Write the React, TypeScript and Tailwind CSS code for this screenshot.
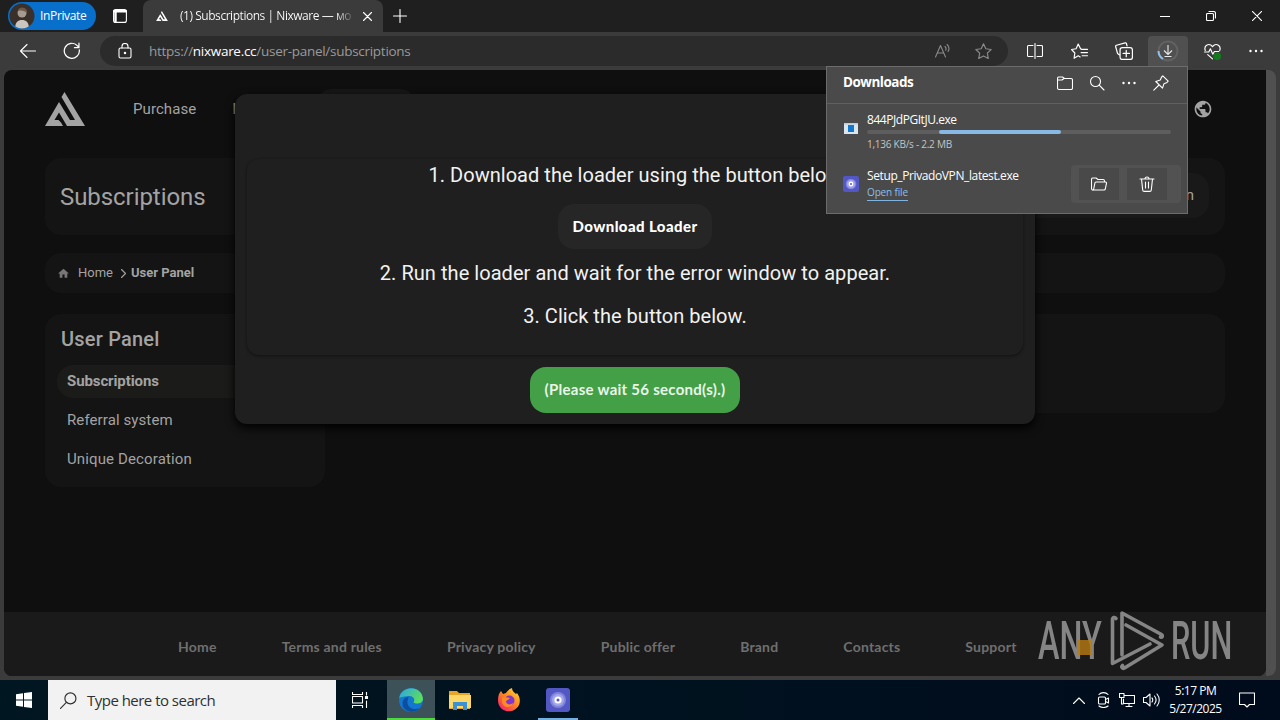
import type { ReactNode } from 'react'
import { MdHome, MdPublic } from 'react-icons/md'

type IconProps = { className?: string; children: ReactNode; box?: string }

function Icon({ className = 'size-4', children, box = '0 0 16 16' }: IconProps) {
  return (
    <svg
      viewBox={box}
      fill="none"
      stroke="currentColor"
      strokeWidth="1.1"
      strokeLinecap="round"
      strokeLinejoin="round"
      className={`shrink-0 ${className}`}
    >
      {children}
    </svg>
  )
}

function NixLogo({ className }: { className?: string }) {
  return (
    <svg viewBox="0 0 40 34" fill="currentColor" className={className}>
      <path d="M0 34 14 10 25 28H30L16.500 5 19.500 0 40 34H22L14 20.500 9.500 28H13.500L16 30.500 18 34Z" />
    </svg>
  )
}

function VpnIcon({ className }: { className?: string }) {
  return (
    <svg viewBox="0 0 24 24" className={`shrink-0 ${className}`}>
      <rect width="24" height="24" rx="3" fill="#5357c4" />
      <circle cx="12" cy="12" r="8" fill="#8085da" />
      <circle cx="12" cy="12" r="6" fill="#a3a6ee" />
      <circle cx="12" cy="12" r="3.600" fill="#fff" />
      <circle cx="12" cy="12" r="1.500" fill="#5357c4" />
    </svg>
  )
}

function Dots({ className }: { className?: string }) {
  return (
    <svg viewBox="0 0 14 4" fill="currentColor" className={`h-1 w-[14px] ${className}`}>
      <circle cx="1.500" cy="2" r="1.200" />
      <circle cx="7" cy="2" r="1.200" />
      <circle cx="12.500" cy="2" r="1.200" />
    </svg>
  )
}

function TabBar() {
  return (
    <div className="flex h-8 bg-[#1f1f1f]">
      <div className="mt-[2px] ml-2 flex h-7 w-[88px] items-center rounded-full bg-[#0870cb]">
        <svg viewBox="0 0 26 26" className="ml-px size-[26px]">
          <defs>
            <clipPath id="avatar">
              <circle cx="13" cy="13" r="12.500" />
            </clipPath>
          </defs>
          <g clipPath="url(#avatar)">
            <rect width="26" height="26" fill="#3a2f29" />
            <circle cx="13" cy="10" r="4.500" fill="#a69b90" />
            <path d="M6 26c0-7 3-9 7-9s7 2 7 9Z" fill="#c9c5c0" />
            <path d="M9 8c0-4 7-5 9 0v2c-2-2-5-3-9-2Z" fill="#6b5a4c" />
          </g>
        </svg>
        <span className="ml-[5px] text-[12px] tracking-[-0.35px] text-white">InPrivate</span>
      </div>
      <div className="ml-[17px] flex items-center">
        <Icon className="size-[14px] text-white" box="0 0 14 14">
          <rect x="0.600" y="0.600" width="12.800" height="12.800" rx="2" />
          <path d="M1 2.300h12M2.500 3v9.500" strokeWidth="2.400" />
        </Icon>
      </div>
      <div className="ml-4 flex h-8 w-60 items-center rounded-t-lg bg-[#3b3b3b] pl-[13px]">
        <NixLogo className="h-[10px] w-3 text-white" />
        <span className="ml-3 w-[176px] bg-linear-to-r from-white from-88% to-[#3b3b3b] bg-clip-text text-[12px] tracking-[-0.46px] whitespace-nowrap text-transparent">
          (1) Subscriptions | Nixware — <span className="text-[12px]">мо</span>
        </span>
        <Icon className="ml-[7px] size-[9px] text-white" box="0 0 9 9">
          <path d="m.5.5 8 8m0-8-8 8" />
        </Icon>
      </div>
      <Icon className="mt-[9px] ml-[10px] size-[14px] text-white" box="0 0 14 14">
        <path d="M7 .5v13M.5 7h13" />
      </Icon>
      <div className="mt-[11px] mr-[18px] ml-auto flex gap-9 text-white">
        <Icon className="size-[10px]" box="0 0 10 10">
          <path d="M0 5.500h10" />
        </Icon>
        <Icon className="size-[10px]" box="0 0 10 10">
          <rect x=".5" y="2.500" width="7" height="7" rx="1" />
          <path d="M3 .5h4.500a2 2 0 0 1 2 2V7" />
        </Icon>
        <Icon className="size-[10px]" box="0 0 10 10">
          <path d="m.3.300 9.400 9.400m0-9.400L.300 9.700" />
        </Icon>
      </div>
    </div>
  )
}

function Toolbar() {
  return (
    <div className="flex h-[38px] items-center bg-[#3b3b3b] text-white">
      <Icon className="ml-5 size-4">
        <path d="M15.500 8H.8M7 1.500.5 8 7 14.500" />
      </Icon>
      <Icon className="ml-[27px] size-[18px]">
        <path d="M14.500 7A6.700 6.700 0 1 1 12.800 3.300L14.200 4.700M14.200 1v4h-4" />
      </Icon>
      <div className="ml-[19px] flex h-[30px] w-[908px] items-center rounded-full bg-[#2b2b2b]">
        <Icon className="ml-[18px] h-4 w-[14px]" box="0 0 14 16">
          <rect x="1" y="5" width="12" height="10" rx="1.500" />
          <path d="M4 5V3.500a3 3 0 0 1 6 0V5" />
          <circle cx="7" cy="10" r=".7" fill="currentColor" />
        </Icon>
        <span className="ml-[17px] text-[13.5px] tracking-[-0.28px] text-[#9a9a9a]">
          https://<span className="text-white">nixware.cc</span>/user-panel/subscriptions
        </span>
        <div className="mr-4 ml-auto flex items-center gap-6 text-[#8a8a8a]">
          <Icon className="size-4">
            <path d="M.5 14 5.500 2.500l5 11.500M2.300 10h6.400M10 3.500c1.200 1.200 1.200 2.800.7 3.800M12 1.500c2.200 2 2.300 5 1 7" />
          </Icon>
          <Icon className="size-[17px]">
            <path d="m8 .8 2.200 4.600 5 .7-3.600 3.500.9 5L8 12.200l-4.500 2.400.9-5L.8 6.100l5-.7Z" />
          </Icon>
        </div>
      </div>
      <div className="ml-[19px] flex items-center">
        <Icon className="size-4">
          <path d="M6 2.500H1.500a1 1 0 0 0-1 1v9a1 1 0 0 0 1 1H6M10 2.500h4.500a1 1 0 0 1 1 1v9a1 1 0 0 1-1 1H10M8 .5v15" />
        </Icon>
        <Icon className="ml-7 size-[17px]">
          <path d="M10 6 9 5.400 6.800 1 4.800 5.400l-4.300.7 3.100 3.300-.7 5 3.900-2.300 1.800 1M10 6h5.500M9.500 9h6M10.500 12h5" />
        </Icon>
        <Icon className="ml-[27px] size-[18px]">
          <path d="M4 11.500 2.300 10.300.6 4.200a1 1 0 0 1 .7-1.300L9 .8a1 1 0 0 1 1.200.6l.5 2" />
          <rect x="4.500" y="5" width="11" height="10.500" rx="2" />
          <path d="M10 7.500v5.500M7.200 10.200h5.600" />
        </Icon>
        <div className="ml-[15px] flex h-[30px] w-10 items-center justify-center rounded-t bg-[#505050]">
          <svg viewBox="0 0 22 22" fill="none" className="size-[22px]">
            <circle cx="11" cy="11" r="9.500" stroke="#626262" strokeWidth="2" />
            <path d="M1.500 11a9.500 9.500 0 0 0 4.500 8" stroke="#8fc1ec" strokeWidth="2" />
            <path d="M11 5v9.500m-4-4 4 4 4-4M7.500 16.500h7" stroke="#e8e8e8" strokeWidth="1.100" />
          </svg>
        </div>
        <Icon className="ml-4 size-[17px]">
          <path d="M1.200 7C-.5 2 5-.5 8 3.500c3-4 8.500-1.500 6.800 3.500M.5 8.500h4L6 5.500l2.300 5 1.500-2.500H14M3.500 11 8 15" />
          <circle cx="12.500" cy="12.500" r="3.600" fill="#127a1c" stroke="none" />
        </Icon>
        <Dots className="ml-7" />
      </div>
    </div>
  )
}

const footerLinks = [
  'Home',
  'Terms and rules',
  'Privacy policy',
  'Public offer',
  'Brand',
  'Contacts',
  'Support',
]

function Site() {
  return (
    <div className="flex h-[606px] w-[1262px] flex-col overflow-hidden rounded-tl-lg rounded-b-lg bg-[#0f0f0f] font-[Roboto,sans-serif] text-[#a3a3a3]">
      <header className="flex h-[78px] items-center pr-[53px] pl-[41px]">
        <NixLogo className="h-[34px] w-10" />
        <span className="ml-12 text-[15px] tracking-[0.08px]">Purchase</span>
        <span className="ml-9 text-[15px]">Info</span>
        <div className="ml-[58px] h-10 w-[100px] rounded-2xl bg-[#171717]" />
        <MdPublic className="mb-px ml-auto size-5" />
      </header>
      <main className="mt-[10px] ml-[41px] w-[1180px]">
        <div className="flex h-[77px] items-center justify-between rounded-2xl bg-[#141414] pr-4 pl-[15px]">
          <h1 className="text-[24px] tracking-[-0.06px]">Subscriptions</h1>
          <span className="mb-[2px] flex h-[45px] w-[190px] items-center justify-end rounded-2xl bg-[#191919] pr-[15px] text-[15px]">
            Activation
          </span>
        </div>
        <div className="mt-[18px] flex h-10 items-center rounded-2xl bg-[#141414] pl-3 text-[13px]">
          <MdHome className="size-[13px] text-[#777]" />
          <span className="ml-2">Home</span>
          <Icon className="ml-2 h-[9px] w-[5px]" box="0 0 5 9">
            <path d="m.5.5 4 4-4 4" />
          </Icon>
          <span className="ml-[5px] font-bold">User Panel</span>
        </div>
        <div className="mt-[21px] flex items-start gap-5">
          <aside className="h-[173px] w-[280px] rounded-2xl bg-[#141414] px-3 pt-2">
            <h2 className="ml-1 text-[20px] leading-[34px] font-medium tracking-[0.2px]">User Panel</h2>
            <div className="mt-[9px] h-[33px] rounded-2xl bg-[#1b1b19] pl-[10px] text-[15px] leading-[32px] font-bold tracking-[-0.1px]">
              Subscriptions
            </div>
            <div className="mt-[6px] h-[33px] pl-[10px] text-[15px] leading-[33px] tracking-[0.1px]">Referral system</div>
            <div className="mt-[6px] h-[33px] pl-[10px] text-[15px] leading-[33px] tracking-[0.13px]">Unique Decoration</div>
          </aside>
          <div className="h-[99px] flex-1 rounded-2xl bg-[#141414]" />
        </div>
      </main>
      <footer className="mt-auto flex h-16 items-center gap-[65px] bg-[#1a1a1a] pt-[5px] pl-[174px] font-[Lato,sans-serif] text-[14px] tracking-[0.2px] text-[#6f6f6f]">
        {footerLinks.map((label) => (
          <span key={label} className="font-bold whitespace-nowrap">
            {label}
          </span>
        ))}
      </footer>
    </div>
  )
}

function LoaderDialog() {
  return (
    <div className="absolute top-[94px] left-[235px] flex h-[330px] w-[800px] flex-col items-center rounded-xl bg-[#1f1f1f] font-[Roboto,sans-serif] text-[20px] text-[#f2f2f2] shadow-[0_4px_10px_#000]">
      <div className="mt-[65px] flex h-[196px] w-[776px] flex-col items-center rounded-xl shadow-[0_1px_3px_#111]">
        <p className="mt-[2px] leading-7 tracking-[0.03px]">1. Download the loader using the button below</p>
        <div className="mt-[15px] flex h-[45px] w-[154px] items-center justify-center rounded-2xl bg-[#262626] font-[Lato,sans-serif] text-[15px] font-black tracking-[0.4px] text-white">
          Download Loader
        </div>
        <p className="mt-[10px] leading-7 tracking-[0.05px]">2. Run the loader and wait for the error window to appear.</p>
        <p className="mt-[15px] leading-7 tracking-[0.03px]">3. Click the button below.</p>
      </div>
      <div className="mt-3 flex h-[46px] w-[210px] items-center justify-center rounded-2xl bg-[#43a047] pb-[2px] font-[Lato,sans-serif] text-[15px] font-bold tracking-[0.27px] text-[#e9f6e9]">
        (Please wait 56 second(s).)
      </div>
    </div>
  )
}

function Downloads() {
  return (
    <div className="absolute top-[66px] left-[826px] h-[148px] w-[362px] border border-[#6c6c6c] bg-[#4a4a4a] text-white">
      <div className="flex h-[37px] items-center border-b border-[#606060] pr-[18px] pb-1 pl-4">
        <span className="mb-px text-[13.5px] font-bold tracking-[-0.5px]">Downloads</span>
        <div className="ml-auto flex items-center gap-4">
          <Icon>
            <path d="M.5 3.500a1.500 1.500 0 0 1 1.500-1.500h3.500l2 1.500H14a1.500 1.500 0 0 1 1.500 1.500v8a1.500 1.500 0 0 1-1.500 1.500H2A1.500 1.500 0 0 1 .5 13ZM.8 5H5l2-1.500" />
          </Icon>
          <Icon>
            <circle cx="6.500" cy="6.500" r="5" />
            <path d="m10.200 10.200 4.800 4.800" />
          </Icon>
          <Dots className="mx-px" />
          <Icon>
            <path d="m9.800.8 5.400 5.400-1.200 1.200-3 1.300-1.500 4.500L2.800 6.500l4.500-1.500 1.300-3ZM6 10 .8 15.200" />
          </Icon>
        </div>
      </div>
      <div className="flex h-[56px] pl-[17px]">
        <svg viewBox="0 0 14 11" className="mt-[19px] h-[11px] w-[14px]">
          <path d="M0 0h14v11H0Z" fill="#d9e6f0" />
          <path d="M4 2h6v7H4Z" fill="#1177cf" />
          <path d="M0 0h14v1.500H0Z" fill="#b9cbd8" />
        </svg>
        <div className="ml-[9px] w-[304px]">
          <div className="mt-[7px] text-[12px] leading-[18px] tracking-[-0.45px]">844PJdPGItJU.exe</div>
          <div className="mt-[1px] h-1 rounded-full bg-[#5e5e5e]">
            <div className="ml-[72px] h-1 w-[122px] rounded-full bg-[#87b9e4]" />
          </div>
          <div className="mt-[3px] text-[10px] leading-[14px] tracking-[-0.25px] text-[#c4c4c4]">1,136 KB/s - 2.2 MB</div>
        </div>
      </div>
      <div className="flex pl-4">
        <VpnIcon className="mt-4 size-4" />
        <div className="ml-2 pt-[7px]">
          <div className="text-[12px] leading-[18px] tracking-[-0.39px]">Setup_PrivadoVPN_latest.exe</div>
          <div className="w-[41px] border-b border-[#7fb4e0] text-[10px] leading-[15px] tracking-[-0.15px] whitespace-nowrap text-[#8bbfe9]">Open file</div>
        </div>
        <div className="mt-[5px] mr-[6px] ml-auto flex h-[38px] w-[110px] gap-2 rounded bg-[#525252] py-[3px] pl-2">
          <div className="flex h-8 w-10 items-center justify-center bg-[#494949]">
            <Icon>
              <path d="M2.500 14A1.500 1.500 0 0 1 .5 12.500v-9A1.500 1.500 0 0 1 2 2h3l2 1.500h5A1.500 1.500 0 0 1 13.500 5v1M2.500 14l1.300-6.500A1.500 1.500 0 0 1 5.200 6h9.300a1 1 0 0 1 1 1.200L14.300 13a1.300 1.300 0 0 1-1.300 1Z" />
            </Icon>
          </div>
          <div className="flex h-8 w-10 items-center justify-center bg-[#494949]">
            <Icon>
              <path d="M1 3h14M6 3a2 2 0 0 1 4 0M2.500 3l1.200 11a1.500 1.500 0 0 0 1.500 1.400h5.600a1.500 1.500 0 0 0 1.500-1.400L13.500 3M6.500 6v6M9.500 6v6" />
            </Icon>
          </div>
        </div>
      </div>
    </div>
  )
}

function Watermark() {
  return (
    <div className="absolute top-[609px] left-[1038px] flex h-[62px] w-[194px] items-center font-[Roboto,sans-serif] text-[53px] leading-[62px] font-medium text-[#858585]">
      <div className="w-[71px] pt-px">
        <span className="inline-block origin-left scale-x-[0.61]">ANY</span>
      </div>
      <svg
        viewBox="0 0 56 62"
        fill="none"
        stroke="currentColor"
        strokeWidth="3.6"
        strokeLinejoin="round"
        strokeLinecap="round"
        className="h-[62px] w-14 shrink-0"
      >
        <path d="M7 9.500C6 8 3.500 8 3.500 11V54.500L41 35" />
        <path d="M13 46V4L52.500 25.500C54 26.500 53.500 28.500 51.500 28" />
        <path d="M17 16 53 36 15.500 59C13.500 60 12 58 13.500 56.500" />
      </svg>
      <div className="ml-[6px] w-[60px] pt-px">
        <span className="inline-block origin-left scale-x-[0.58]">RUN</span>
      </div>
      <div className="absolute top-[31px] left-[39px] h-[15px] w-[15px] bg-[#b87a12]/80" />
    </div>
  )
}

function Taskbar() {
  return (
    <div className="flex h-10 items-center bg-linear-to-r from-[#001620] via-[#00121f] to-[#000b1c] text-white">
      <svg viewBox="0 0 16 16" fill="currentColor" className="ml-4 size-4">
        <path d="M0 2.200 7 1.200v6.300H0ZM8 1 16 0v7.500H8ZM0 8.500h7v6.300l-7-1ZM8 8.500h8V16l-8-1.100Z" />
      </svg>
      <div className="ml-4 flex h-10 w-72 items-center bg-[#f2f2f2] text-[#303030]">
        <Icon className="ml-3 size-[17px]">
          <circle cx="9.800" cy="6" r="5.200" />
          <path d="m6 9.800-5.500 5.700" />
        </Icon>
        <span className="ml-[10px] text-[15px] tracking-[-0.52px]">Type here to search</span>
      </div>
      <div className="flex w-[51px] justify-center pr-[2px]">
        <Icon box="0 0 17 16" className="h-4 w-[17px]">
          <path d="M.5 0v2.500h10V0M.5 16v-2.500h10V16M.5 4.500h10v6.500H.5ZM14.500 0v3M14.500 9v7" />
          <path d="M13.500 4.500h2v2h-2Z" fill="currentColor" />
        </Icon>
      </div>
      <div className="flex h-10 w-12 flex-col items-center border-b-2 border-[#4fd93c] bg-[#3d5159] pt-2">
        <svg viewBox="0 0 24 24" className="size-6">
          <defs>
            <linearGradient id="edge" x1="0" y1="0" x2="1" y2="0.4">
              <stop offset="0" stopColor="#2aa5e8" />
              <stop offset="1" stopColor="#5bdc60" />
            </linearGradient>
          </defs>
          <circle cx="12" cy="12" r="12" fill="#1376cf" />
          <path d="M.3 10C2-3 23-3.500 24 11c-.5 5-7 5.500-9.500 3.500 2-3 0-6.500-4.500-6.500-4 0-8 1-9.700 2Z" fill="url(#edge)" />
          <path d="M8.500 13c-1 6 6 10 12 7-4 5-12 5-16-.5C2 14 5 9 9.500 9Z" fill="#0c4f9e" />
        </svg>
      </div>
      <div className="flex w-[49px] justify-center">
        <svg viewBox="0 0 22 20" className="h-5 w-[22px]">
          <path d="M0 1h8l2 2h11v16H0Z" fill="#e9a524" />
          <path d="M0 5h22v13H0Z" fill="#ffd766" />
          <path d="M4 20v-8h14v8h-4v-4H8v4Z" fill="#3b91d6" />
        </svg>
      </div>
      <div className="flex w-[49px] justify-center">
        <svg viewBox="0 0 24 24" className="size-6">
          <defs>
            <linearGradient id="fox" x1="1" y1="0" x2="0.2" y2="1">
              <stop offset="0" stopColor="#ffe03a" />
              <stop offset="0.5" stopColor="#ff8a1e" />
              <stop offset="1" stopColor="#f5216c" />
            </linearGradient>
          </defs>
          <path d="M1 12C1 8 2 5 4 3l2 3 3-1c1-2 3-4 6-5 0 3 2 4 4 6l1-1c3 4 3.500 8 2 12-5 10-21 8-21-5Z" fill="url(#fox)" />
          <circle cx="12.500" cy="12.500" r="5" fill="#8236d1" />
          <path d="M5 10c3-2 5 0 8 0-1 2-4 2-4 4 1 3 5 3 7 1-1 5-10 6-11-1Z" fill="#ff8b22" />
        </svg>
      </div>
      <div className="ml-[5px] flex h-10 w-10 flex-col items-center border-b-2 border-[#74afe2] pt-2">
        <VpnIcon className="size-6" />
      </div>
      <div className="mr-[25px] ml-auto flex items-center">
        <Icon className="h-[7px] w-3" box="0 0 12 7">
          <path d="m.5 6.500 5.500-5.500 5.500 5.500" />
        </Icon>
        <Icon className="ml-[11px] size-4">
          <rect x="2.500" y="5" width="7" height="7" rx="1" />
          <path d="m9.500 7.500 3-1.500v5l-3-1.500M3 2.500C5 0 10 0 12 2.500M3 14c2 2 7 2 9 0" />
        </Icon>
        <Icon className="ml-[7px] size-4">
          <path d="M5 3.500h10.500v8H4.500V7M10 11.500v3M7 14.500h6M.5 1.500H5v4H.5ZM2.500 5.500V12H4" />
        </Icon>
        <Icon className="ml-2 h-4 w-[17px]" box="0 0 17 16">
          <path d="M.5 5.500H3L7 2v12l-4-3.500H.5ZM9 6c1 1 1 3 0 4M11.500 4c2 2.500 2 5.500 0 8M14 2c3 3.500 3 8.500 0 12" />
        </Icon>
        <div className="ml-[9px] w-[53px] text-center text-[12px] leading-[18px] tracking-[-0.5px] whitespace-nowrap">
          <div>5:17 PM</div>
          <div>5/27/2025</div>
        </div>
        <Icon className="ml-[17px] size-4">
          <path d="M.5 1h15v11.500h-5L8 15l-2.500-2.500h-5Z" />
        </Icon>
      </div>
    </div>
  )
}

export default function App() {
  return (
    <div className="relative flex h-[720px] w-[1280px] flex-col overflow-hidden bg-[#3b3b3b] font-['Open_Sans',sans-serif]">
      <TabBar />
      <Toolbar />
      <div className="flex h-[610px] pl-1">
        <Site />
        <div className="h-[606px] w-[10px] rounded-r-lg bg-[#505050]" />
      </div>
      <Taskbar />
      <LoaderDialog />
      <Downloads />
      <Watermark />
    </div>
  )
}
